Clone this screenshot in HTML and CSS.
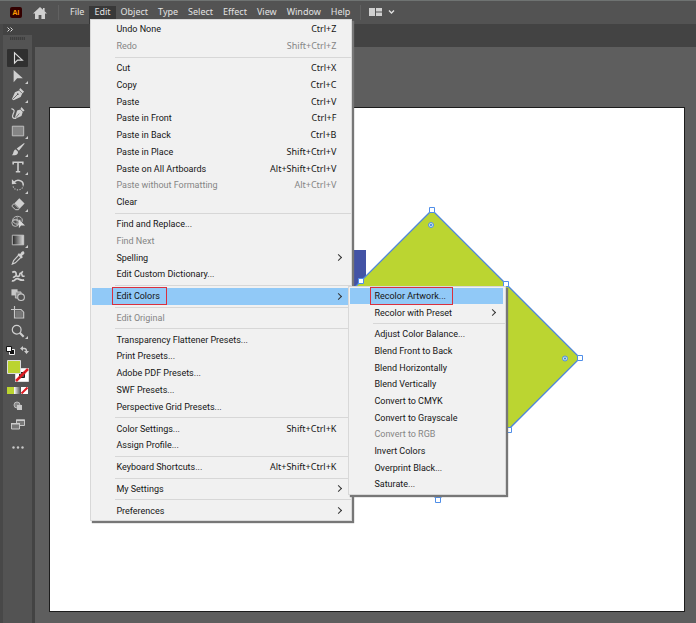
FILE: index.html
```html
<!DOCTYPE html>
<html lang="en">
<head>
<meta charset="utf-8">
<title>Illustrator</title>
<link rel="stylesheet" href="styles.css">
</head>
<body>
<div class="app">
  <header class="menubar">
    <svg class="logo" viewBox="0 0 12 11" aria-hidden="true"><rect width="12" height="11" rx="2" fill="#330000"/><text x="6" y="8" text-anchor="middle" class="logo-text">Ai</text></svg>
    <button class="home" aria-label="Home"><svg viewBox="0 0 14 12"><path d="M7 0 0 6.500h2V12h3.600V8h2.800v4H12V6.500h2L11.600 4.200V1H10v1.700z" fill="#d0d0d0"/></svg></button>
    <span class="divider"></span>
    <nav class="menus">
      <button>File</button>
      <div class="open-menu">
        <button class="active">Edit</button>
        <ul class="menu edit-menu">
          <li><button>Undo None<kbd>Ctrl+Z</kbd></button></li>
          <li><button disabled>Redo<kbd>Shift+Ctrl+Z</kbd></button></li>
          <li class="sep"></li>
          <li><button>Cut<kbd>Ctrl+X</kbd></button></li>
          <li><button>Copy<kbd>Ctrl+C</kbd></button></li>
          <li><button>Paste<kbd>Ctrl+V</kbd></button></li>
          <li><button>Paste in Front<kbd>Ctrl+F</kbd></button></li>
          <li><button>Paste in Back<kbd>Ctrl+B</kbd></button></li>
          <li><button>Paste in Place<kbd>Shift+Ctrl+V</kbd></button></li>
          <li><button>Paste on All Artboards<kbd>Alt+Shift+Ctrl+V</kbd></button></li>
          <li><button disabled>Paste without Formatting<kbd>Alt+Ctrl+V</kbd></button></li>
          <li><button>Clear</button></li>
          <li class="sep"></li>
          <li><button>Find and Replace...</button></li>
          <li><button disabled>Find Next</button></li>
          <li><button class="parent">Spelling</button></li>
          <li><button>Edit Custom Dictionary...</button></li>
          <li class="sep"></li>
          <li class="has-submenu">
            <button class="parent selected"><span class="marked">Edit Colors</span></button>
            <ul class="menu submenu">
              <li><button class="selected"><span class="marked">Recolor Artwork...</span></button></li>
              <li><button class="parent">Recolor with Preset</button></li>
              <li class="sep"></li>
              <li><button>Adjust Color Balance...</button></li>
              <li><button>Blend Front to Back</button></li>
              <li><button>Blend Horizontally</button></li>
              <li><button>Blend Vertically</button></li>
              <li><button>Convert to CMYK</button></li>
              <li><button>Convert to Grayscale</button></li>
              <li><button disabled>Convert to RGB</button></li>
              <li><button>Invert Colors</button></li>
              <li><button>Overprint Black...</button></li>
              <li><button>Saturate...</button></li>
            </ul>
          </li>
          <li class="sep"></li>
          <li><button disabled>Edit Original</button></li>
          <li class="sep"></li>
          <li><button>Transparency Flattener Presets...</button></li>
          <li><button>Print Presets...</button></li>
          <li><button>Adobe PDF Presets...</button></li>
          <li><button>SWF Presets...</button></li>
          <li><button>Perspective Grid Presets...</button></li>
          <li class="sep"></li>
          <li><button>Color Settings...<kbd>Shift+Ctrl+K</kbd></button></li>
          <li><button>Assign Profile...</button></li>
          <li class="sep"></li>
          <li><button>Keyboard Shortcuts...<kbd>Alt+Shift+Ctrl+K</kbd></button></li>
          <li class="sep"></li>
          <li><button class="parent">My Settings</button></li>
          <li class="sep"></li>
          <li><button class="parent">Preferences</button></li>
        </ul>
      </div>
      <button>Object</button>
      <button>Type</button>
      <button>Select</button>
      <button>Effect</button>
      <button>View</button>
      <button>Window</button>
      <button>Help</button>
    </nav>
    <span class="divider"></span>
    <button class="workspace" aria-label="Arrange documents"><svg viewBox="0 0 26 8"><path d="M0 0h6v8H0zM7 0h6v3.500H7zM7 4.500h6V8H7z" fill="#d0d0d0"/><path d="m20 2.500 2.500 2.500L25 2.500" fill="none" stroke="#e0e0e0" stroke-width="1.400"/></svg></button>
  </header>

  <div class="workarea">
    <aside class="tools">
      <button class="collapse" aria-label="Expand panel"><svg viewBox="0 0 6 5"><path d="M.5.500l2 2-2 2M3.500.500l2 2-2 2" fill="none" stroke="#ddd"/></svg></button>
      <div class="grip"></div>
      <div class="tool-list">
        <button class="tool active" aria-label="Selection"><svg viewBox="0 0 16 16"><path d="M4 2v12l3.500-3.500H13z" fill="none" stroke="#ddd" stroke-width="1.300"/></svg></button>
        <button class="tool more" aria-label="Direct selection"><svg viewBox="0 0 16 16"><path d="M3 1v14l4-4.500h6.500z" fill="#d0d0d0"/></svg></button>
        <button class="tool more" aria-label="Pen"><svg viewBox="0 0 16 16"><path d="m10.500 1 4.500 4.500-2 1.500-2 4.500L3 15l-2-1 3.500-8L9 4z" fill="#d0d0d0"/><path d="m2 14 5.500-5.500M9 3.500 12.500 7" stroke="#535353" stroke-width=".9"/><circle cx="7.700" cy="8.200" r="1" fill="#535353"/></svg></button>
        <button class="tool" aria-label="Curvature"><svg viewBox="0 0 16 16"><path d="m12 1 3.500 4-2 1.500-1.500 5L6 14l-1.500-1 2.500-8L10.500 4z" fill="#d0d0d0"/><path d="m5.500 13.500 4-5M10.500 3.500l3.500 3.500" stroke="#535353" stroke-width=".8"/><path d="M.5 3c4 1 3.500 3 2 6S1.500 15 6 14" fill="none" stroke="#d0d0d0" stroke-width="1.300"/></svg></button>
        <button class="tool more" aria-label="Rectangle"><svg viewBox="0 0 16 16"><path d="M1.500 2.500h13v11h-13z" fill="#858585" stroke="#c8c8c8"/></svg></button>
        <button class="tool more" aria-label="Paintbrush"><svg viewBox="0 0 16 16"><path d="m15 1-8.500 6.500 2.500 2.500L15.500 2zM5.500 8.500 8 11c0 4.500-4 4-7 4C3.500 13.500 2 9 5.500 8.500z" fill="#d0d0d0"/></svg></button>
        <button class="tool more" aria-label="Type"><svg viewBox="0 0 16 16"><path d="M2.500 5V2.500h11V5M8 2.500v11M5.500 13.500h5" fill="none" stroke="#d0d0d0" stroke-width="1.800"/></svg></button>
        <button class="tool more" aria-label="Rotate"><svg viewBox="0 0 16 16"><path d="M3.500 5C6 1 14 2 14 8" fill="none" stroke="#d0d0d0" stroke-width="1.700"/><path d="M14 8c0 7-11 8-12 0" fill="none" stroke="#b8b8b8" stroke-width="1.300" stroke-dasharray="1.500 1.500"/><path d="M1 1.500V7l5.500-.5z" fill="#d0d0d0"/></svg></button>
        <button class="tool more" aria-label="Eraser"><svg viewBox="0 0 16 16"><path d="m9.500 1.500 6 6-5.500 5.500-6-6z" fill="#d0d0d0"/><path d="m3.500 7.500 6 6-1 1H5L1.500 11V9.500z" fill="#535353" stroke="#d0d0d0" stroke-width="1.100"/></svg></button>
        <button class="tool" aria-label="Shape builder"><svg viewBox="0 0 16 16"><ellipse cx="7.500" cy="6" rx="5.500" ry="4.500" fill="none" stroke="#c8c8c8"/><circle cx="5" cy="9" r="4" fill="none" stroke="#c8c8c8"/><path d="M2 6h10M7 2v10" stroke="#c8c8c8" stroke-width=".7"/><path d="M9 5v10l2.500-3H16z" fill="#d8d8d8"/></svg></button>
        <button class="tool more" aria-label="Gradient"><svg viewBox="0 0 16 16"><defs><linearGradient id="grad"><stop stop-color="#222"/><stop offset="1" stop-color="#ddd"/></linearGradient></defs><path d="M1.500 2.500h13v11h-13z" fill="url(#grad)" stroke="#c8c8c8"/></svg></button>
        <button class="tool" aria-label="Eyedropper"><svg viewBox="0 0 16 16"><path d="m9 4.500 2.500 2.500L5 13.500l-3.500 1.500L3 11z" fill="none" stroke="#d0d0d0" stroke-width="1.300"/><path d="m7.500 4 1.500-1.500L10.500 3.500l1.500-2.500c2-1.500 4 0 3 2.500L12.500 5.500l1 1.500-1.500 1.500z" fill="#d0d0d0"/></svg></button>
        <button class="tool" aria-label="Symbol sprayer"><svg viewBox="0 0 16 16"><path d="M1.500 4c3-2.500 4.500 0 4.500 2.500S4 8 2.500 10M1 13.500c3 1 3.500-2.500 6-2.500s4 3 8 1.500" fill="none" stroke="#d0d0d0" stroke-width="2"/><path d="M6 7.500c2.500 2 4 .5 4-1.500s2.500-1.500 2.500.5 1.500 2 3 1.500M12 4.500l1.500-2" fill="none" stroke="#d0d0d0" stroke-width="1.800"/></svg></button>
        <button class="tool" aria-label="Blend"><svg viewBox="0 0 16 16"><path d="M.5 1.500h7v7h-7z" fill="#c8c8c8"/><path d="M5 4.500h6.500v7H5z" fill="#919191" stroke="#c8c8c8"/><circle cx="11.500" cy="10.500" r="3.800" fill="#535353" stroke="#c8c8c8" stroke-width="1.200"/></svg></button>
        <button class="tool" aria-label="Artboard"><svg viewBox="0 0 16 16"><path d="M4 0v13.500h10.500V7l-3-3H0" fill="none" stroke="#c8c8c8" stroke-width="1.300"/><path d="M5 5h6.500l2 2v6H5z" fill="#777"/></svg></button>
        <button class="tool more" aria-label="Zoom"><svg viewBox="0 0 16 16"><circle cx="6.500" cy="6.500" r="5" fill="none" stroke="#d0d0d0" stroke-width="1.400"/><path d="m10 10 4.500 4.500" stroke="#d0d0d0" stroke-width="2.400"/></svg></button>
      </div>
      <div class="swatch-actions">
        <button aria-label="Default fill and stroke"><svg viewBox="0 0 9 9"><path d="M3.500 3.500h5v5h-5z" fill="#111" stroke="#eee"/><path d="M.5.500h5v5h-5z" fill="#fff" stroke="#111"/></svg></button>
        <button aria-label="Swap fill and stroke"><svg viewBox="0 0 9 9"><path d="M2 2.500h2.500q2 0 2 3" fill="none" stroke="#ccc" stroke-width="1.400"/><path d="M3 0v5L0 2.500zM4 5h5L6.500 8z" fill="#ccc"/></svg></button>
      </div>
      <button class="swatches" aria-label="Fill and stroke"><svg viewBox="0 0 22 22"><path d="M8.500 8.500h13v13h-13z" fill="#fff" stroke="#ddd"/><path d="m9 21 12-12" stroke="#e01b22" stroke-width="2.500"/><path d="M12.500 12.500h5v5h-5z" fill="#535353" stroke="#222"/><path d="m12.500 17.500 5-5" stroke="#e01b22" stroke-width="2.500"/><path d="M.5.500h13v13H.500z" fill="#bbd430" stroke="#ddd"/></svg></button>
      <button class="modes" aria-label="Fill modes"><svg viewBox="0 0 21 7"><defs><linearGradient id="fade"><stop stop-color="#fff"/><stop offset="1" stop-color="#444"/></linearGradient></defs><path d="M0 0h7v7H0z" fill="#bbd430"/><path d="M7 0h7v7H7z" fill="url(#fade)"/><path d="M14 0h7v7h-7z" fill="#fff"/><path d="m14.500 6.500 6-6" stroke="#e01b22" stroke-width="2"/></svg></button>
      <button class="small-tool" aria-label="Drawing mode"><svg viewBox="0 0 10 10"><circle cx="4" cy="4" r="3" fill="#888" stroke="#bbb"/><path d="M4 4h5v5H4z" fill="#c8c8c8"/></svg></button>
      <button class="screen-mode" aria-label="Screen mode"><svg viewBox="0 0 14 11"><path d="M5.500 1h8v5.500h-8z" fill="#777" stroke="#c8c8c8"/><path d="M.5 4.500h8V10h-8z" fill="#777" stroke="#c8c8c8"/><path d="M5 1.300h9M0 4.800h9" stroke="#ccc" stroke-width="1.600"/></svg></button>
      <button class="dots" aria-label="Edit toolbar"><svg viewBox="0 0 12 3"><circle cx="1.500" cy="1.500" r="1.200"/><circle cx="6" cy="1.500" r="1.200"/><circle cx="10.500" cy="1.500" r="1.200"/></svg></button>
    </aside>
    <main class="document">
      <div class="tabs"></div>
      <div class="canvas">
        <div class="artboard">
          <svg class="artwork" viewBox="0 0 300 300" aria-label="Artwork">
            <path d="M26 45h50v60H26z" fill="#4353a5"/>
            <path d="M142 5 290 153 148 295 0 147z" fill="#bbd531" stroke="#4f86dc" stroke-width="1.300"/>
            <g fill="#fff" stroke="#4f8ee8"><path d="M139.500 2.500h5v5h-5zM68.500 73.500h5v5h-5zM213.500 76.500h5v5h-5zM287.500 150.500h5v5h-5zM216.500 222.500h5v5h-5zM145.500 292.500h5v5h-5z"/><circle cx="141" cy="20" r="2.500" fill="#cde6e0"/><circle cx="275" cy="153.500" r="2.500" fill="#cde6e0"/></g>
            <g fill="#2f78e0"><circle cx="141" cy="20" r="1"/><circle cx="275" cy="153.500" r="1"/></g>
          </svg>
        </div>
      </div>
    </main>
  </div>
</div>
</body>
</html>
```
FILE: styles.css
```css
* { box-sizing: border-box; }
body { margin: 0; font-family: "Noto Sans", "Open Sans", sans-serif; font-size: 9px; }
button { margin: 0; padding: 0; border: 0; background: none; font: inherit; color: inherit; }
svg { display: block; }
ul { margin: 0; padding: 0; list-style: none; }

.app { display: flex; flex-direction: column; min-height: 100vh; background: #5e5e5e; }

/* Menu bar */
.menubar { display: flex; align-items: center; height: 24px; padding-left: 10px; border-top: 1px solid #6f7372; background: #535353; color: #e2e2e2; }
.logo { width: 12px; height: 11px; }
.logo-text { font: bold 7px "Open Sans", sans-serif; fill: #ff9a00; }
.home { margin-left: 11px; }
.home svg { width: 14px; height: 12px; }
.divider { width: 1px; height: 15px; margin: 0 6px 0 11px; background: #616161; }
.menus { display: flex; align-items: flex-end; height: 18px; align-self: flex-end; }
.menus > button, .open-menu > button { height: 18px; padding: 0 5px 6px; line-height: 12px; }
.open-menu { position: relative; }
.open-menu > .active { background: #383838; }
.menus + .divider { margin: 0 8px 0 5px; }
.workspace { padding-bottom: 2px; }
.workspace svg { width: 26px; height: 8px; }

/* Drop-down menus */
.menu { position: absolute; display: flex; flex-direction: column; padding: 1px 0; border: 1px solid #d8d8d8; background: #f1f1f1; color: #151515; font-family: Roboto, "Open Sans", sans-serif; box-shadow: 2px 2px 1px #777; }
.menu > li { flex: 1 1 0; display: flex; min-height: 0; padding: 0 2px 0 1px; }
.menu > .sep { flex: 0 0 5px; align-items: center; padding: 0; }
.sep::before { content: ""; flex: 1; height: 1px; margin-left: 24px; background: #d7d7d7; }
.menu button { display: flex; flex: 1; align-items: center; padding: 0 13px 0 24px; line-height: 12px; white-space: nowrap; }
.menu button:disabled { color: #858585; }
.menu kbd { margin-left: auto; font-family: "Noto Sans", "Open Sans", sans-serif; font-size: 9px; }
.menu .parent { padding-right: 8px; }
.parent::after { content: ""; width: 4px; height: 4px; margin-left: auto; border: solid #333; border-width: 1px 1px 0 0; transform: rotate(45deg); }
.menu .selected { background: #91c9f7; }
.marked { margin-left: -4px; padding: 2px 6px 2px 3px; border: 1px solid #d9303e; }
.edit-menu { z-index: 2; top: 14px; left: 1px; width: 262px; height: 502px; }
.has-submenu { position: relative; }
.submenu { z-index: 3; top: -2px; left: 257px; width: 158px; height: 209px; }

/* Tool panel */
.workarea { display: flex; flex: 1; }
.tools { display: flex; flex-direction: column; align-items: center; width: 35px; border-left: 3px solid #484848; border-right: 3px solid #434343; background: #535353; }
.collapse { align-self: stretch; height: 11px; padding-left: 4px; background: #434343; }
.collapse svg { width: 6px; height: 5px; }
.grip { width: 15px; height: 3px; margin: 2px 0 9px; background: repeating-linear-gradient(90deg, #3e3e3e 0 1px, #4b4b4b 1px 2px); }
.tool-list { display: grid; grid-auto-rows: 1fr; width: 21px; height: 291px; }
.tool { position: relative; display: grid; place-items: center; }
.tool svg { width: 14px; height: 14px; }
.tool.active { border-radius: 1px; background: #303030; }
.tool.more::after { content: ""; position: absolute; right: 0; bottom: 1px; border: solid transparent; border-width: 0 0 3px 3px; border-bottom-color: #ccc; }
.swatch-actions { display: flex; justify-content: space-between; width: 23px; margin: 6px 0 5px; }
.swatch-actions svg { width: 9px; height: 9px; }
.swatches svg { width: 22px; height: 22px; }
.modes { margin: 5px 0 7px; }
.modes svg { width: 21px; height: 7px; }
.small-tool svg { width: 10px; height: 10px; }
.screen-mode { margin: 8px 0 16px; }
.screen-mode svg { width: 14px; height: 11px; }
.dots svg { width: 12px; height: 3px; fill: #c8c8c8; }

/* Document */
.document { display: flex; flex: 1; flex-direction: column; min-width: 0; }
.tabs { height: 23px; background: #434343; }
.canvas { display: flex; flex: 1; padding: 60px 11px 11px 14px; }
.artboard { position: relative; flex: 1; border: 1px solid #1c1c1c; background: #fff; overflow: hidden; }
.artwork { position: absolute; top: 97px; left: 240px; width: 300px; height: 300px; }
```
